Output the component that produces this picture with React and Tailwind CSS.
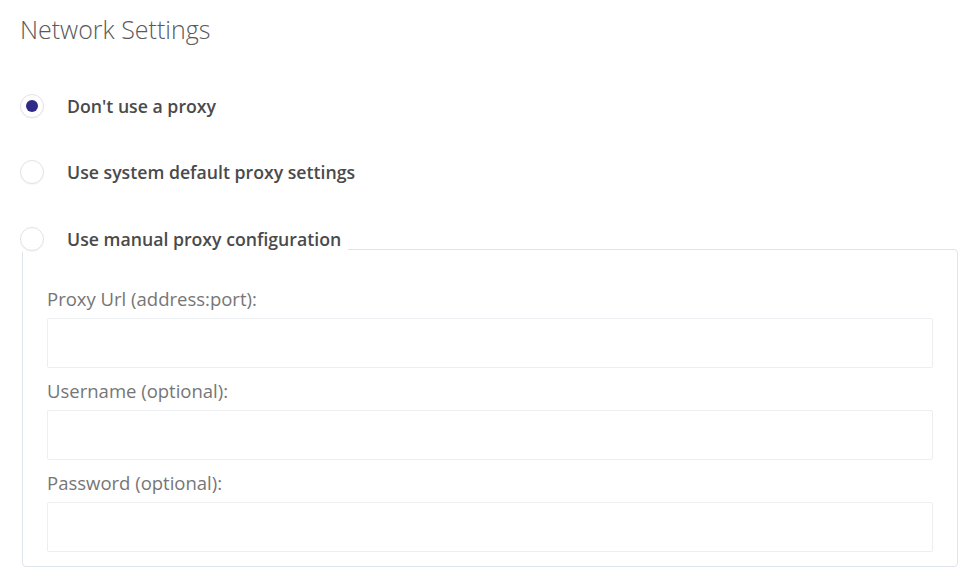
const font = { fontFamily: '"Open Sans", "Noto Sans", sans-serif' };

function Radio({ checked }) {
  return (
    <span className="relative flex h-6 w-6 shrink-0 items-center justify-center rounded-full border border-[#e1e2e8] bg-white shadow-[0_1px_1px_rgba(0,0,0,0.04)]">
      {checked && <span className="h-3 w-3 rounded-full bg-[#2e2a88]" />}
    </span>
  );
}

function Option({ label, checked, className = '' }) {
  return (
    <label className={`flex h-6 items-center gap-[23px] ${className}`}>
      <Radio checked={checked} />
      <span className="text-[17.7px] font-semibold text-[#4a4a4a]">{label}</span>
    </label>
  );
}

function Field({ label, first }) {
  return (
    <div className={first ? 'mt-4' : 'mt-[11px]'}>
      <div className="h-6 text-[18.5px] font-medium leading-6 text-[#767676]">{label}</div>
      <input className="mt-[7px] block h-[50px] w-full rounded-[2px] border border-[#eceef2] bg-white px-3 outline-none" />
    </div>
  );
}

export default function App() {
  return (
    <div className="min-h-[580px] bg-white px-5 pt-[13px]" style={font}>
      <h1 className="text-[25px] font-light leading-8 text-[#595959]">Network Settings</h1>

      <div className="mt-[49px] flex flex-col">
        <Option label="Don't use a proxy" checked />
        <Option label="Use system default proxy settings" className="mt-[42px]" />

        <fieldset className="mx-[2px] mt-[43px] rounded-[4px] border border-[#dfe3ea] p-0">
          <legend className="pb-5 pr-[7px]">
            <Option label="Use manual proxy configuration" className="-ml-[3px]" />
          </legend>
          <div className="px-6 pb-[14px]">
            <Field label="Proxy Url (address:port):" first />
            <Field label="Username (optional):" />
            <Field label="Password (optional):" />
          </div>
        </fieldset>
      </div>
    </div>
  );
}
